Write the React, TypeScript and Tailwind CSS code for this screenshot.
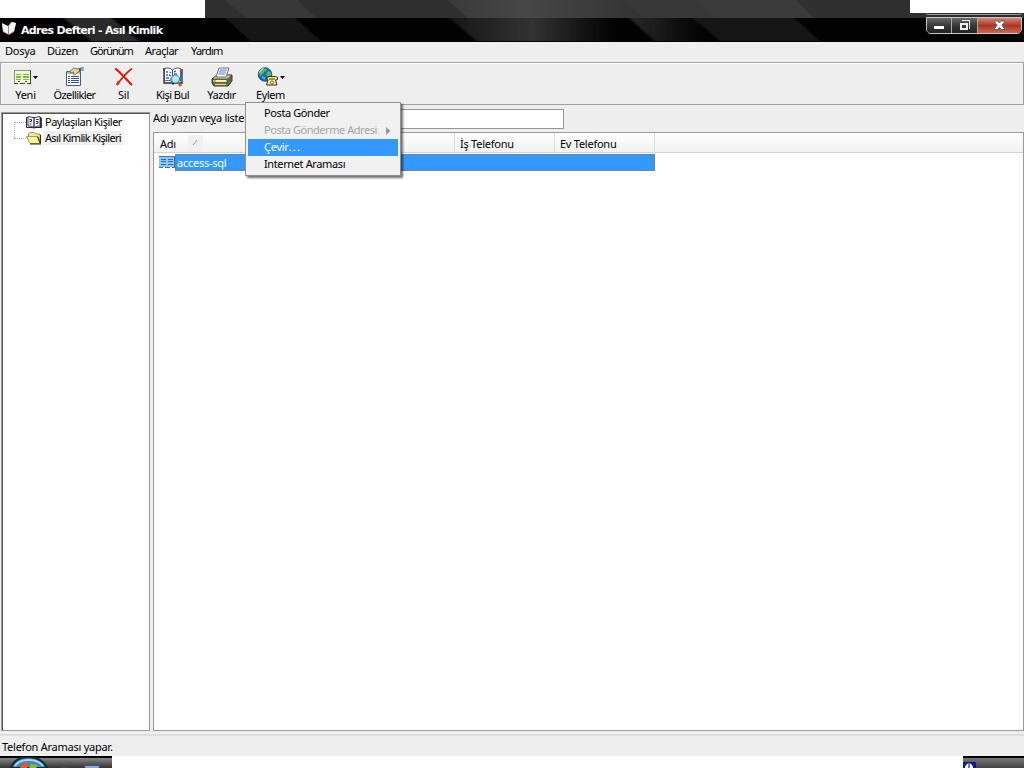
import type { ReactNode } from "react";

const menus = [
  { label: "Dosya", className: "w-[42px]" },
  { label: "Düzen", className: "w-[43px] tracking-[-0.45px]" },
  { label: "Görünüm", className: "w-[55px] tracking-[-1px]" },
  { label: "Araçlar", className: "w-[46px] tracking-[-0.45px]" },
  { label: "Yardım", className: "w-[45px] tracking-[-0.75px]" },
];

const CardIcon = () => (
  <svg width="19" height="16" viewBox="0 0 19 16" shapeRendering="crispEdges">
    <path d="M1 2h16v12h1v-12" fill="#33402b" />
    <path d="M1 1h16v13h-3v-2h-2v2H8v-2H6v2H1z" fill="#effbd0" />
    <path d="M1 1h16v1H1zM1 1h1v13H1z" fill="#8a9a78" />
    <path d="M17 1h1v14h-1zM1 14h4v1H1zM5 12h2v1H5zM7 14h5v1H7zM12 12h2v1h-2zM14 14h4v1h-4z" fill="#3a4830" />
    <path d="M3 5h5v1H3zM10 5h6v1h-6zM3 7h5v2H3zM10 7h6v2h-6zM3 10h5v1H3zM10 10h6v1h-6z" fill="#7fb84c" />
  </svg>
);

const PropertiesIcon = () => (
  <svg width="20" height="20" viewBox="0 0 20 20">
    <path d="M1.5 4.5h14v14h-14z" fill="#fff" stroke="#515a70" />
    <path d="M2 5h13v2H2z" fill="#a9bdd2" />
    <g shapeRendering="crispEdges" fill="#3450b4">
      <path d="M3 9h2v1H3zM6 9h8v1H6zM3 11h2v1H3zM6 11h8v1H6zM3 13h2v1H3zM6 13h8v1H6zM3 15h2v1H3zM6 15h8v1H6z" />
    </g>
    <path d="M5 4l4-3 4 1 3-1v3l-3 1-3 3-2-1 1-2-4 1z" fill="#e6d694" stroke="#6b6342" strokeWidth=".8" />
    <path d="M14 1h2v3h-2z" fill="#4c5560" />
    <path d="M16 0h3v4h-3z" fill="#6ab9d8" />
  </svg>
);

const DeleteIcon = () => (
  <svg width="20" height="20" viewBox="0 0 20 20" fill="none">
    <path d="M2 2C7 6 12 12 18 18" stroke="#8e1c10" strokeWidth="1.9" />
    <path d="M1 1.5C6 5 12 12 17 17.5" stroke="#f0260f" strokeWidth="1.7" />
    <path d="M18 1.5C12 6 7 12 3 18" stroke="#d62310" strokeWidth="1.6" />
    <path d="M5 14l-2 4" stroke="#e62410" strokeWidth="2.4" />
  </svg>
);

const FindIcon = () => (
  <svg width="22" height="20" viewBox="0 0 22 20">
    <path d="M1 2h1v14h8l1 1 1-1h8V2" fill="#fff" stroke="#20263c" strokeWidth="1.3" />
    <path d="M2.5 1.5c3-1 6-.5 8 1.5v12c-2-2-5-2-8-1zM10.500 3c2-2 5-2.500 8-1.500v12.500c-3-1-6-1-8 1z" fill="#fff" stroke="#36405c" strokeWidth=".9" />
    <path d="M4 5h2M8 5l1 1M4 8h2M7 8l2 1M4 11h3M8 12h1M12 5l2-1M12 7h3" stroke="#4364b4" strokeWidth="1.4" />
    <path d="M19 2v3" stroke="#d83a27" strokeWidth="2" />
    <path d="M19 5v4" stroke="#2f62b8" strokeWidth="2" />
    <path d="M16 15l3 4" stroke="#c6561f" strokeWidth="2.6" />
    <circle cx="13.500" cy="12" r="4" fill="#9eecf5" stroke="#3e95a8" strokeWidth="1.1" />
    <path d="M11.500 11l2-1.500" stroke="#fff" strokeWidth="1.3" />
  </svg>
);

const PrintIcon = () => (
  <svg width="22" height="20" viewBox="0 0 22 20">
    <path d="M1 12l5-4h15v6l-4 5H3l-2-3z" fill="#6b683c" stroke="#37361f" />
    <path d="M2 11.500l4-3h14l-4 3z" fill="#d7d397" />
    <path d="M5 10l3-9h10l-3 9z" fill="#fff" stroke="#596780" strokeWidth=".9" />
    <path d="M9 3h7M8 5h7M7.500 7h7" stroke="#557dd2" />
    <path d="M2 12.500h14v3H2z" fill="#f3efb6" stroke="#504d2d" strokeWidth=".8" />
    <path d="M4 17.500h11" stroke="#ddd799" strokeWidth="1.3" />
    <path d="M3 14h2" stroke="#3ca134" strokeWidth="1.2" />
  </svg>
);

const ActionIcon = () => (
  <svg width="22" height="20" viewBox="0 0 22 20">
    <circle cx="8" cy="7.500" r="6.800" fill="#1d65d6" stroke="#174080" strokeWidth=".8" />
    <path d="M6 1.500l4 .5-1 2-2 1-1 2-3 2-1-3 2-3zM11 4l3 1v4l-3 1-2-3zM5 9l3 1v3l-3-2z" fill="#4dc14e" />
    <path d="M2.500 5.500l2-3 2-1" fill="none" stroke="#a9e1fa" strokeWidth="1.2" />
    <path d="M10 12.500v-2l2-1h6.500l2 1v2l-2 .5 1.500 5H9.500l1.500-5z" fill="#fff095" stroke="#342e12" />
    <path d="M12 12h6" stroke="#342e12" />
    <circle cx="15" cy="15.500" r="1.600" fill="#fff" stroke="#65551d" strokeWidth=".9" />
  </svg>
);

const tools: { label: string; icon: ReactNode; arrow?: boolean; text?: string }[] = [
  { label: "Yeni", icon: <CardIcon />, arrow: true },
  { label: "Özellikler", icon: <PropertiesIcon />, text: "tracking-[-0.6px]" },
  { label: "Sil", icon: <DeleteIcon /> },
  { label: "Kişi Bul", icon: <FindIcon />, text: "tracking-[-0.55px]" },
  { label: "Yazdır", icon: <PrintIcon />, text: "tracking-[-0.45px]" },
  { label: "Eylem", icon: <ActionIcon />, arrow: true, text: "tracking-[-0.45px]" },
];

const BookIcon = () => (
  <svg width="16" height="13" viewBox="0 0 16 13">
    <path d="M.5 1.500h14.500v10H9l-1 1-1-1H.5z" fill="#eceef4" stroke="#23263c" />
    <path d="M2 .7c3 0 5 .8 6 1.800V12c-1-1.500-3-2-6-2zM14 .7c-3 0-5 .8-6 1.800V12c1-1.500 3-2 6-2z" fill="#fff" stroke="#2e334d" strokeWidth=".9" />
    <path d="M3.500 3.500h2v2h-2M3.500 8h2M10 3.500h2.500M10 5.500h2v2h-2" stroke="#26306e" fill="none" />
    <path d="M15 2v10" stroke="#111" strokeWidth="1.300" />
  </svg>
);

const FolderIcon = () => (
  <svg width="16" height="13" viewBox="0 0 16 13">
    <path d="M2.500 4V2l1.500-1.500h4L9.500 2h4.500v9" fill="#f3e7a1" stroke="#9d914b" />
    <path d="M.5 4.500h10.500l3 7H4z" fill="#fbf5a2" stroke="#aaa044" />
    <path d="M11.500 4.500l3 7V3M4 12h11" stroke="#282713" fill="none" />
  </svg>
);

const Backdrop = () => (
  <svg width="1024" height="42" viewBox="0 0 1024 42" className="absolute inset-0">
    <defs>
      <linearGradient id="sheen" gradientUnits="userSpaceOnUse" x1="450" x2="615">
        <stop stopColor="#fff" stopOpacity=".08" />
        <stop offset=".5" stopColor="#fff" stopOpacity=".19" />
        <stop offset="1" stopColor="#fff" stopOpacity="0" />
      </linearGradient>
      <linearGradient id="glow" gradientUnits="userSpaceOnUse" x1="447" x2="640">
        <stop stopColor="#444" stopOpacity=".5" />
        <stop offset=".4" stopColor="#474747" />
        <stop offset="1" stopColor="#333" />
      </linearGradient>
      <linearGradient id="fade" gradientUnits="userSpaceOnUse" x1="630" x2="705">
        <stop stopColor="#fff" stopOpacity=".15" />
        <stop offset="1" stopColor="#fff" stopOpacity="0" />
      </linearGradient>
      <filter id="soft"><feGaussianBlur stdDeviation="1.3" /></filter>
    </defs>
    <path d="M0 18h1024v24H0z" fill="#020202" />
    <g filter="url(#soft)">
      <path d="M60 15h48l36 30H96z" fill="#2c2c2c" />
      <path d="M222 15h70l33 30h-70z" fill="#191919" />
      <path d="M446 15h165l31 30H481z" fill="url(#sheen)" />
      <path d="M626 15h65l33 30h-65z" fill="url(#fade)" />
      <path d="M691 15h100l33 30H724z" fill="#191919" />
    </g>
    <path d="M0 0h1024v18H0z" fill="#2f2f2f" />
    <path d="M224 0h73l20 18h-70z" fill="#383838" />
    <path d="M447 0h176l20 18H468z" fill="url(#glow)" />
    <path d="M623 0h71l20 18h-71z" fill="#383838" />
    <path d="M694 0h102l18 18H714z" fill="#3b3b3b" />
    <path d="M0 41h1024v1H0z" fill="#000" />
  </svg>
);

const TitleBar = () => (
  <div className="relative flex h-[42px] flex-col overflow-hidden">
    <Backdrop />
    <div className="relative flex h-[18px] items-start justify-between">
      <div className="h-[18px] w-[205px] bg-white" />
      <div className="h-[13px] w-[114px] bg-white" />
    </div>
    <div className="relative flex h-6 justify-between">
      <div className="flex items-center">
        <svg width="20" height="18" viewBox="0 0 20 18" className="mb-1">
          <path d="M2 5l6 2 3-4 5 1-2 9-5 3-6-3z" fill="#d98a5c" />
          <path d="M2 4l6 3v8l-5-3zM9 7l3-4 4 1-2 8-5 3z" fill="#eef4fa" />
          <path d="M8.500 8v7" stroke="#7b93ad" />
        </svg>
        <h1 className="ml-px mt-[2px] font-['DejaVu_Sans'] text-[11px] font-bold tracking-[-0.7px] text-white">
          Adres Defteri - Asıl Kimlik
        </h1>
      </div>
      <div className="-mt-[5px] mr-[2px] flex h-[21px] w-24 flex-col justify-between">
        <div className="h-[2px] w-full rounded-b border-b border-[#999]" />
        <div className="flex h-[17px] w-full overflow-hidden rounded-b-[5px] border border-[#c9c9c9]">
          <div className="flex w-[25px] items-center justify-center border-r border-[#aaa] bg-gradient-to-b from-[#696969] via-[#393939] to-[#222]">
            <div className="mt-[3px] h-[3px] w-[10px] bg-white" />
          </div>
          <div className="flex w-[26px] items-center justify-center border-r border-[#aaa] bg-gradient-to-b from-[#696969] via-[#393939] to-[#222]">
            <svg width="11" height="11" viewBox="0 0 11 11" fill="none" stroke="#eee" shapeRendering="crispEdges">
              <path d="M3 .5h7.500v8" />
              <path d="M2 4h6v5H2z" strokeWidth="2" />
            </svg>
          </div>
          <div className="flex flex-1 items-center justify-center bg-gradient-to-b from-[#d18678] via-[#aa3425] to-[#cc684e]">
            <svg width="13" height="11" viewBox="0 0 13 11">
              <path d="M1 1h4l1.500 2L8 1h4L9 5.200l3 4.300H8L6.500 7.200 5 9.500H1l3-4.300z" fill="#fff" stroke="#626773" />
            </svg>
          </div>
        </div>
      </div>
    </div>
  </div>
);

const ActionMenu = () => (
  <div className="absolute left-[245px] top-[102px] z-10 h-[74px] w-[156px] border border-[#919191] bg-[#f1f1f1] px-[2px] pt-[2px] shadow-[2px_2px_2px_rgba(0,0,0,0.55)]">
    <div className="h-[17px] pl-4 leading-4 tracking-[-0.4px]">Posta Gönder</div>
    <div className="flex h-[17px] items-center justify-between pl-4 pr-[7px] leading-4 tracking-[-0.45px] text-[#a5a5a5]">
      <span className="-mt-px">Posta Gönderme Adresi</span>
      <svg width="5" height="8" viewBox="0 0 5 8"><path d="M0 0l4.500 4L0 8z" fill="#999" /></svg>
    </div>
    <div className="h-[17px] bg-[#3399ff] pl-4 leading-4 text-white">
      Çevir<span className="tracking-[1.2px]">...</span>
    </div>
    <div className="h-[17px] pl-4 leading-4 tracking-[-0.38px]">Internet Araması</div>
  </div>
);

const App = () => (
  <div className="relative flex h-[768px] w-[1024px] flex-col overflow-hidden bg-[#eeeeee] font-['Noto_Sans',sans-serif] text-[11px] leading-[14px] tracking-[-0.25px] text-black">
    <TitleBar />

    {/* Menu bar */}
    <nav className="flex h-5 items-center pb-[2px] pl-[5px]">
      {menus.map((m) => (
        <div key={m.label} className={m.className}>{m.label}</div>
      ))}
    </nav>

    {/* Toolbar */}
    <div className="flex h-[43px] border border-[#a0a0a0] shadow-[inset_1px_1px_0_#fff]">
      {tools.map((t) => (
        <div key={t.label} className="flex w-[49px] flex-col items-center whitespace-nowrap">
          <div className="mt-[3px] flex h-[22px] items-center">
            {t.icon}
            {t.arrow && (
              <svg width="6" height="3" viewBox="0 0 6 3"><path d="M1 0h5L3.500 3z" /></svg>
            )}
          </div>
          <span className={t.text}>{t.label}</span>
        </div>
      ))}
    </div>

    {/* Folders and contacts */}
    <main className="flex h-[626px]">
      <div className="ml-px mt-[7px] w-[149px] border border-[#999] bg-white">
        <div className="flex h-full border-l border-t border-[#555]">
          <div className="flex w-[23px] justify-end pt-2">
            <div className="h-[17px] w-[12px] border-y border-l border-dotted border-[#aaa]" />
          </div>
          <div className="flex flex-col">
            <div className="flex h-4 items-center"><BookIcon /><span className="ml-[3px] whitespace-nowrap tracking-[-0.48px]">Paylaşılan Kişiler</span></div>
            <div className="flex h-4 items-center"><FolderIcon /><span className="ml-px whitespace-nowrap bg-[#efefef] px-[2px] tracking-[-0.67px]">Asıl Kimlik Kişileri</span></div>
          </div>
        </div>
      </div>
      <div className="ml-[3px] flex flex-1 flex-col">
        <div className="flex h-[27px] items-center">
          <span className="-mt-px w-[145px]">Adı yazın ve<u>y</u>a liste</span>
          <div className="mt-[1px] h-5 w-[266px] border border-[#969696] bg-white" />
        </div>
        <div className="flex-1 border border-[#999] bg-white">
          <div className="flex h-5 items-center border-b border-[#d3d3d3] bg-gradient-to-b from-white to-[#f0f1f2]">
            <div className="flex h-full w-[301px] items-center border-r border-[#ddd] pl-[6px] pt-[2px]">
              <span>Adı</span>
              <div className="-mt-[2px] ml-3 flex h-[15px] w-[15px] items-center justify-center bg-[#f0f0f0]">
                <svg width="7" height="7" viewBox="0 0 7 7"><path d="M1 6l4-5" stroke="#999" /></svg>
              </div>
            </div>
            <div className="flex h-full w-[100px] items-center border-r border-[#ddd] pl-[5px] pt-[2px]">İş Telefonu</div>
            <div className="flex h-full w-[100px] items-center border-r border-[#ddd] pl-[5px] pt-[2px]">Ev Telefonu</div>
          </div>
          <div className="flex h-[18px] w-[501px] items-center pl-[5px]">
            <svg width="16" height="13" viewBox="0 0 16 13" shapeRendering="crispEdges">
              <path d="M0 0h16v12h-3v-1h-2v1H6v-1H4v1H0z" fill="#8cc4f4" />
              <path d="M0 0h16v1H0zM15 0h1v12h-1zM0 11h4v1H0zM6 11h5v1H6zM13 11h3v1h-3z" fill="#3973ad" />
              <path d="M2 3h5v1H2zM9 3h5v1H9zM2 5h5v1H2zM9 5h5v1H9zM2 8h5v1H2zM9 8h5v1H9z" fill="#2b6db0" />
            </svg>
            <div className="flex h-[17px] flex-1 items-center border border-[#6f8299] bg-[#3399ff] pl-px pt-px text-white">access-sql</div>
          </div>
        </div>
      </div>
    </main>

    {/* Status bar */}
    <footer className="flex h-[25px] flex-col pt-[3px]">
      <div className="flex flex-1 items-center border-t-2 border-[#dedede] bg-[#eeeeee] pl-[2px] pt-[2px]">Telefon Araması yapar.</div>
    </footer>

    {/* Taskbar edge */}
    <div className="flex h-3 justify-between bg-white">
      <div className="flex h-full w-28 items-end border-t-2 border-black bg-gradient-to-b from-[#888] to-[#333]">
        <svg width="112" height="11" viewBox="0 0 112 11">
          <path d="M11 11C14 3 20 0 28 0s15 3 19 11z" fill="#4286ac" stroke="#102b40" strokeWidth="2" />
          <path d="M15 9C20 1 37 1 43 9" stroke="#a9d2e3" fill="none" strokeWidth="2" />
          <path d="M20 11l3-5 6 1-2 4z" fill="#ed592c" />
          <path d="M29 11l2-4 7 1-2 3z" fill="#83bd37" />
          <path d="M61 8h5l3 3h-6z" fill="#444" />
          <path d="M85 9h14v2H85z" fill="#dbe9fc" stroke="#3969ad" />
        </svg>
      </div>
      <div className="flex h-full w-[61px] items-end border-t-2 border-black bg-gradient-to-b from-[#777] to-[#444]">
        <svg width="13" height="6" viewBox="0 0 13 6">
          <path d="M0 0h13v6H0z" fill="#111b83" />
          <path d="M2 6C2 0 10 0 10 6z" fill="#fff" />
          <path d="M6 2v4" stroke="#000" />
        </svg>
      </div>
    </div>

    <ActionMenu />
  </div>
);

export default App;
